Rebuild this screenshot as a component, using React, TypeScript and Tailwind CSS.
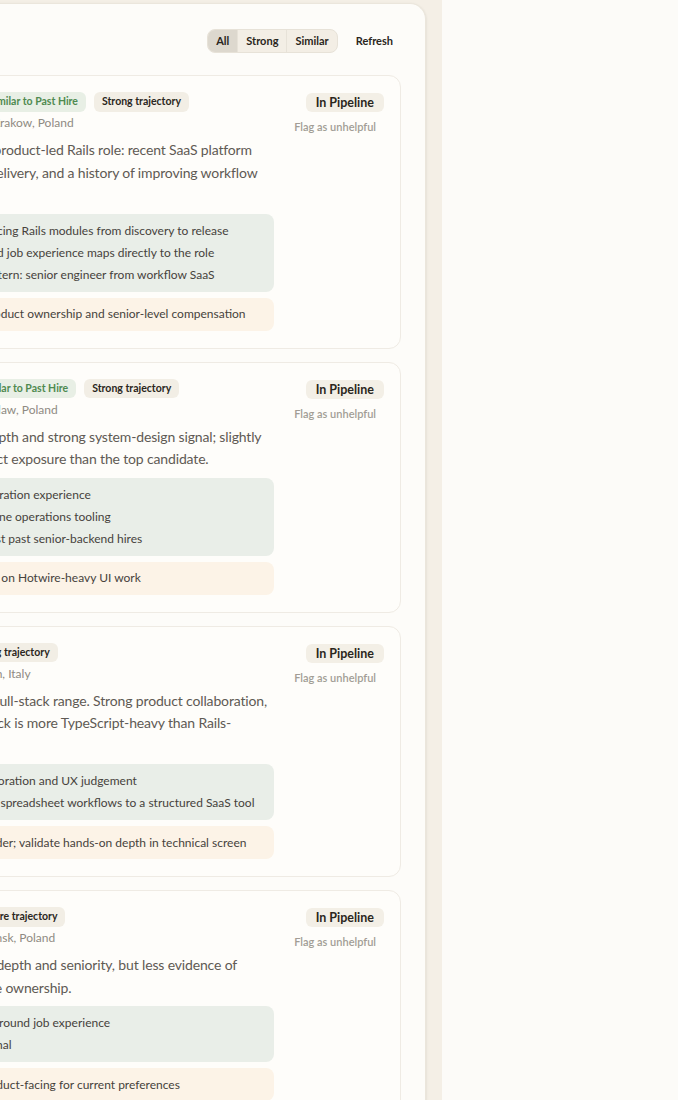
import React, { useState } from "react";

type Candidate = {
  name: string;
  similar: boolean;
  trajectory: string;
  headline: string;
  summary: string;
  strengths: string[];
  risk: string;
};

const candidates: Candidate[] = [
  {
    name: "Katarzyna Kowalczyk",
    similar: true,
    trajectory: "Strong trajectory",
    headline: "Principal Software Developer · Krakow, Poland",
    summary:
      "Strongest overall fit for the product-led Rails role: recent SaaS platform work, end-to-end product delivery, and a history of improving workflow tools.",
    strengths: [
      "Shipped multiple customer-facing Rails modules from discovery to release",
      "Practical Ruby and background job experience maps directly to the role",
      "Matches the key past-hire pattern: senior engineer from workflow SaaS",
    ],
    risk: "Likely to expect both clear product ownership and senior-level compensation",
  },
  {
    name: "Tomasz Szczepański",
    similar: true,
    trajectory: "Strong trajectory",
    headline: "Senior Backend Engineer · Wroclaw, Poland",
    summary:
      "Exceptional Rails and API depth and strong system-design signal; slightly less customer-centric product exposure than the top candidate.",
    strengths: [
      "Deep Postgres and legacy migration experience",
      "Built high-volume event pipeline operations tooling",
      "Benchmarks favourably against past senior-backend hires",
    ],
    risk: "Less recent hands-on practice on Hotwire-heavy UI work",
  },
  {
    name: "Francesca Romano",
    similar: false,
    trajectory: "Strong trajectory",
    headline: "Staff Full-Stack Tech Lead · Milan, Italy",
    summary:
      "Senior engineer with broad full-stack range. Strong product collaboration, though the most current stack is more TypeScript-heavy than Rails-oriented.",
    strengths: [
      "Strong cross-functional collaboration and UX judgement",
      "Led migration off homegrown spreadsheet workflows to a structured SaaS tool",
    ],
    risk: "Leans more toward a tech leader; validate hands-on depth in technical screen",
  },
  {
    name: "Mateusz Jankowski",
    similar: false,
    trajectory: "Mature trajectory",
    headline: "Senior Back-end Engineer · Gdansk, Poland",
    summary:
      "Solid platform and backend depth and seniority, but less evidence of direct product-facing feature ownership.",
    strengths: [
      "Deep Sidekiq, SQS, and background job experience",
      "Clear seniority and impact signal",
    ],
    risk: "Profile could be a tad less product-facing for current preferences",
  },
];

const filters = ["All", "Strong", "Similar"];

const CandidateCard = ({ c }: { c: Candidate }) => {
  return (
    <div className="flex gap-3 rounded-xl border border-[#efebe4] bg-[#fefdfa] px-4 pb-[17px] pt-4">
      <div className="min-w-0 flex-1">
        <div className="flex h-5 items-center gap-2">
          <h3 className="whitespace-nowrap text-[15px] font-bold text-[#2a2620]">
            {c.name}
          </h3>
          {c.similar && (
            <span className="whitespace-nowrap rounded-md bg-[#e8efe5] px-2 py-[2px] text-[10.5px] font-bold text-[#4f8a50]">
              Similar to Past Hire
            </span>
          )}
          <span className="whitespace-nowrap rounded-md bg-[#f2eee5] px-2 py-[2px] text-[10.5px] font-bold text-[#2a2620]">
            {c.trajectory}
          </span>
        </div>
        <p className="mt-[2px] whitespace-nowrap text-[12px] leading-[18px] text-[#8f8a82]">
          {c.headline}
        </p>
        <p className="mt-[7px] text-[14px] leading-[22.5px] tracking-[-0.15px] text-[#5f5a54]">
          {c.summary}
        </p>
        <ul className="mt-[7px] rounded-lg bg-[#e9eee8] px-3 py-1.5 text-[12px] leading-[22px] text-[#46423c]">
          {c.strengths.map((s) => (
            <li key={s} className="whitespace-nowrap">
              {s}
            </li>
          ))}
        </ul>
        <div className="mt-1.5 whitespace-nowrap rounded-lg bg-[#fcf3e7] px-3 py-[5.5px] text-[12px] leading-[22px] text-[#46423c]">
          {c.risk}
        </div>
      </div>
      <div className="flex w-[98px] shrink-0 flex-col items-end pt-px">
        <span className="rounded-md bg-[#f3efe6] px-2.5 py-px text-[12.5px] font-bold leading-[17px] text-[#2a2620]">
          In Pipeline
        </span>
        <button className="mt-[7px] px-2 text-[11px] font-semibold leading-4 text-[#a29d95]">
          Flag as unhelpful
        </button>
      </div>
    </div>
  );
};

export default function App() {
  const [filter, setFilter] = useState("All");

  return (
    <div
      className="flex min-h-[1100px] w-full bg-[#fcfbf8]"
      style={{ fontFamily: "Lato, 'Noto Sans', sans-serif" }}
    >
      <div className="flex w-[442px] shrink-0 justify-end overflow-hidden bg-[#f4efe6] pr-4 pt-[3px]">
        <section className="w-[638px] shrink-0 rounded-t-2xl border border-b-0 border-[#ebe6dc] bg-[#fdfcf9] px-6 pt-[25px] shadow-sm">
          <div className="mb-[22px] flex h-6 items-center justify-between">
            <h2 className="text-[16px] font-bold text-[#2a2620]">
              Recommendations
            </h2>
            <div className="flex items-center gap-[10px]">
              <div className="flex h-6 overflow-hidden rounded-lg border border-[#e7e2d8] bg-[#f3eee5]">
                {filters.map((f, i) => (
                  <button
                    key={f}
                    onClick={() => setFilter(f)}
                    className={
                      (filter === f ? "bg-[#ddd8ce] " : "") +
                      (i > 0 ? "border-l border-[#e7e2d8] " : "") +
                      "px-[8px] text-[11px] font-bold text-[#2a2620]"
                    }
                  >
                    {f}
                  </button>
                ))}
              </div>
              <button className="px-2 text-[11px] font-bold text-[#2a2620]">
                Refresh
              </button>
            </div>
          </div>
          <div className="flex flex-col gap-[13px]">
            {candidates.map((c) => (
              <CandidateCard key={c.name} c={c} />
            ))}
          </div>
        </section>
      </div>
      <div className="flex-1" />
    </div>
  );
}
